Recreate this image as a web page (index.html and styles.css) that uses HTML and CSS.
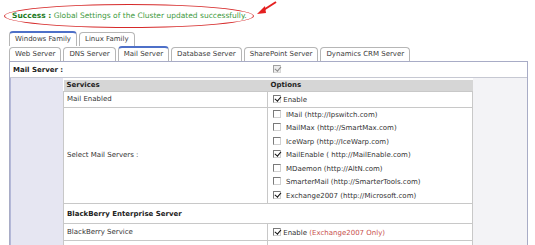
FILE: index.html
```html
<!DOCTYPE html>
<html lang="en">
<head>
  <meta charset="UTF-8" />
  <title>Cluster Settings</title>
  <link rel="stylesheet" href="styles.css">
</head>
<body>
  <div class="notice">
    <span class="oval"><b>Success :</b> Global Settings of the Cluster updated successfully.</span>
    <svg class="arrow" width="24" height="16" viewBox="0 0 24 16">
      <path d="M20 1 L6 10" stroke="#e42020" stroke-width="2" fill="none"/>
      <path d="M1 13 L9 5 L10 12 Z" fill="#e42020"/>
    </svg>
  </div>

  <div class="tabs">
    <div class="tab on">Windows Family</div>
    <div class="tab">Linux Family</div>
  </div>
  <div class="tabs">
    <div class="tab">Web Server</div>
    <div class="tab">DNS Server</div>
    <div class="tab on">Mail Server</div>
    <div class="tab">Database Server</div>
    <div class="tab">SharePoint Server</div>
    <div class="tab">Dynamics CRM Server</div>
  </div>

  <div class="panel">
    <div class="top-row">
      <div class="top-label">Mail Server :</div>
      <div class="top-opt"><span class="cb on dis"></span></div>
    </div>

    <div class="body">
      <div class="side-l"></div>
      <table class="grid">
        <thead>
          <tr><th class="c1">Services</th><th>Options</th></tr>
        </thead>
        <tbody>
          <tr class="r-enabled">
            <td>Mail Enabled</td>
            <td><span class="cb on"></span> Enable</td>
          </tr>
          <tr>
            <td class="mid">Select Mail Servers :</td>
            <td>
              <div class="opts">
                <div class="opt"><span class="cb"></span>IMail (http://Ipswitch.com)</div>
                <div class="opt"><span class="cb"></span>MailMax (http://SmartMax.com)</div>
                <div class="opt"><span class="cb"></span>IceWarp (http://IceWarp.com)</div>
                <div class="opt"><span class="cb on"></span>MailEnable ( http://MailEnable.com)</div>
                <div class="opt"><span class="cb"></span>MDaemon (http://AltN.com)</div>
                <div class="opt"><span class="cb"></span>SmarterMail (http://SmarterTools.com)</div>
                <div class="opt"><span class="cb on"></span>Exchange2007 (http://Microsoft.com)</div>
              </div>
            </td>
          </tr>
          <tr class="r-section">
            <td colspan="2"><b>BlackBerry Enterprise Server</b></td>
          </tr>
          <tr class="r-bb">
            <td>BlackBerry Service</td>
            <td><span class="cb on"></span> Enable <span class="note">(Exchange2007 Only)</span></td>
          </tr>
          <tr class="r-more">
            <td></td>
            <td></td>
          </tr>
        </tbody>
      </table>
      <div class="side-r"></div>
    </div>
  </div>
</body>
</html>
```

FILE: styles.css
```css
* { box-sizing: border-box; margin: 0; padding: 0; }

body {
  font-family: "DejaVu Sans", Verdana, sans-serif;
  font-size: 7px;
  color: #333;
  background: #fff;
  overflow: hidden;
}

.notice {
  position: relative;
  height: 31px;
  padding: 4px 0 0 4px;
}

.oval {
  display: inline-block;
  border: 1.5px solid #d62a2a;
  border-radius: 50%;
  padding: 5px 6px 5px 7px;
  font-size: 7.5px;
  line-height: 12px;
  color: #3e9a3e;
}

.oval b { color: #1d7a1d; }

.arrow {
  position: absolute;
  left: 256px;
  top: 1px;
}

.tabs {
  display: flex;
  align-items: flex-end;
  gap: 2px;
  margin-left: 9px;
}

.tab {
  height: 14px;
  line-height: 13px;
  padding: 0 5px;
  border: 1px solid #b6b6b6;
  border-bottom: none;
  border-radius: 4px 4px 0 0;
  background: #fff;
  color: #3a3a3a;
}

.tab.on {
  height: 15px;
  border-top: 2px solid #4e70c8;
}

.panel {
  margin-left: 9px;
  width: 519px;
  border: 1px solid #a8acc6;
  border-bottom: none;
}

.top-row {
  display: grid;
  grid-template-columns: 257px 1fr;
  align-items: center;
  height: 16px;
  border-bottom: 1px solid #c6c8d2;
}

.top-label {
  padding-left: 3px;
  font-weight: bold;
  color: #222;
}

.top-opt { padding-left: 4px; }

.body {
  display: grid;
  grid-template-columns: 53px 410px 1fr;
}

.side-l { background: #e6e6f2; border-left: 1px solid #b4b8d8; }
.side-r { background: #f3f3f6; }

.grid {
  width: 410px;
  margin-top: 2px;
  border-collapse: collapse;
  background: #fff;
}

.grid th {
  height: 11px;
  padding: 0 3px;
  text-align: left;
  background: #d6d6d6;
  color: #222;
}

.grid th.c1 { width: 204px; }

.grid td {
  padding: 0 3px;
  border: 1px solid #c8c8c8;
  vertical-align: middle;
}

.r-enabled td { height: 16px; }
.r-section td { height: 20px; color: #222; }
.r-bb td { height: 17px; }
.r-more td { height: 20px; }

.opts { padding: 1px 0 0; }

.opt {
  height: 13.5px;
  line-height: 13.5px;
}

.opt .cb { margin-right: 5px; }

.cb {
  display: inline-block;
  position: relative;
  width: 8px;
  height: 8px;
  margin-left: 2px;
  vertical-align: -1px;
  border: 1px solid;
  border-color: #7a7a7a #d0d0d0 #d0d0d0 #7a7a7a;
  background: #fff;
}

.cb.on::after {
  content: "";
  position: absolute;
  left: 1.5px;
  top: -1px;
  width: 2.5px;
  height: 5px;
  border: solid #111;
  border-width: 0 1.5px 1.5px 0;
  transform: rotate(40deg);
}

.cb.dis { background: #ececec; border-color: #a0a0a0 #d8d8d8 #d8d8d8 #a0a0a0; }
.cb.dis::after { border-color: #8a8a8a; }

.note { color: #c8504c; }
```
